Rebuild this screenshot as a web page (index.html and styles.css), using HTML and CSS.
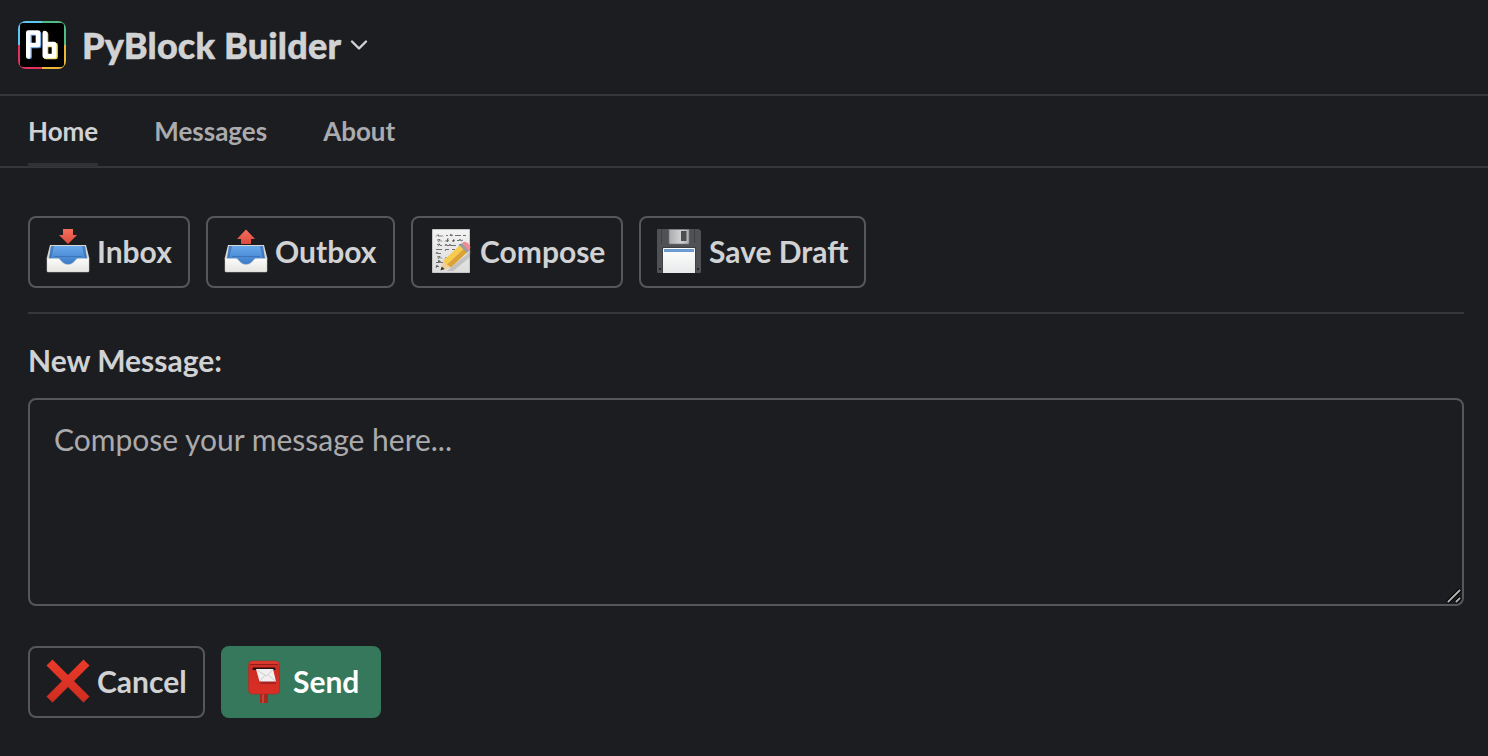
FILE: index.html
```html
<!DOCTYPE html>
<html lang="en">
<head>
<meta charset="utf-8">
<title>PyBlock Builder</title>
<link rel="stylesheet" href="styles.css">
</head>
<body>
<header class="header">
  <svg class="logo" viewBox="0 0 48 48">
    <defs><clipPath id="logo-clip"><rect width="48" height="48" rx="8"/></clipPath></defs>
    <g clip-path="url(#logo-clip)">
      <path fill="#5cc8f2" d="M0 0h24v24H0z"/><path fill="#4fbd84" d="M24 0h24v24H24z"/>
      <path fill="#e0315f" d="M0 24h24v24H0z"/><path fill="#edb63a" d="M24 24h24v24H24z"/>
      <rect x="2" y="2" width="44" height="44" rx="3" fill="#000"/>
    </g>
    <g fill="none" stroke-linejoin="round" stroke-linecap="round" stroke-width="4.600">
      <path stroke="#5b96df" d="M11.600 36V12.500H21V25H13.500"/>
      <path stroke="#f5df68" d="M28 13V36H37.500V24H30"/>
      <path stroke="#fff" d="M10.300 35.500V11.500H20V24H12.500"/>
      <path stroke="#fff" d="M26.800 12V35H36V23H29"/>
    </g>
  </svg>
  <h1 class="title">PyBlock Builder</h1>
  <svg class="chevron" viewBox="0 0 18 12"><path d="M2 2.500l7 7 7-7" fill="none" stroke="#d1d2d3" stroke-width="2.400" stroke-linecap="round" stroke-linejoin="round"/></svg>
</header>
<nav class="tabs">
  <a class="tab tab-active">Home</a>
  <a class="tab">Messages</a>
  <a class="tab">About</a>
</nav>
<main class="content">
  <div class="actions toolbar">
    <button class="btn btn-inbox">
      <svg class="icon" viewBox="0 0 44 44">
        <defs>
          <linearGradient id="tray-blue" x2="0" y2="1"><stop stop-color="#68a9ec"/><stop offset="1" stop-color="#3a78c6"/></linearGradient>
          <linearGradient id="tray-white" x2="0" y2="1"><stop stop-color="#fbfbfa"/><stop offset="1" stop-color="#e6e5e2"/></linearGradient>
          <linearGradient id="arrow-red" x2="0" y2="1"><stop stop-color="#f4705e"/><stop offset="1" stop-color="#dd493e"/></linearGradient>
          <g id="tray">
            <path fill="#d9d8d4" d="M4 16h36l3.500 14H.5z"/>
            <path fill="url(#tray-blue)" d="M5 17h34l2 14-12 5H15L3 31z"/>
            <path fill="#2d5c9d" opacity=".5" d="M8 17L5 30l-2-1L5 17zM36 17l3 13 2-1-2-12zM8 27h28v1H8z"/>
            <path fill="url(#tray-white)" stroke="#c9c8c4" stroke-width=".5" d="M1 29.500h11c3 0 3.500 6 10 6s7-6 10-6h11V42q0 1-1 1H2q-1 0-1-1z"/>
          </g>
        </defs>
        <use href="#tray"/>
        <path fill="url(#arrow-red)" d="M17 0h10v6h4l-9 9-9-9h4z"/>
      </svg>
      <span>Inbox</span>
    </button>
    <button class="btn btn-outbox">
      <svg class="icon" viewBox="0 0 44 44">
        <use href="#tray"/>
        <path fill="url(#arrow-red)" d="M17 15h10V10h4L22 .5 13 10h4z"/>
      </svg>
      <span>Outbox</span>
    </button>
    <button class="btn btn-compose">
      <svg class="icon" viewBox="0 0 44 44">
        <defs><linearGradient id="paper" x2="0" y2="1"><stop stop-color="#f3f3f3"/><stop offset="1" stop-color="#dcdcdc"/></linearGradient></defs>
        <path fill="url(#paper)" stroke="#c5c6c6" d="M3.500.5h37v43h-37z"/>
        <g fill="none" stroke="#484848" stroke-width=".75" stroke-linejoin="round">
          <path d="M7 7.500l2-2 1 2 1-1 1 1 1-1 1 1M17 7l1-1 1 1M21 7l1-2 0 2 2-1M26 7l1-1 1 1 1-1 1 1 1-1 1 1M34 7l1-1 1 1 1-1"/>
          <path d="M8 11l3-.5-2 2.500M11 12.500l1-1 1 1M16 12.500l1-1 1 1 1-3-1 3 2-1M23 12l2-.5M25 10l-1 2.500 2-1M28 12l1-1 1 1 1-2 1 2 2-1"/>
          <path d="M8 15.500l3-.5-2 2.500M11 17l1-1 1 1M16 17l1-2 1 2 1-1 1 1 1-2 1 2 1-1 1 1 1-1 1 1 1-1M30 17l1-2 1 1"/>
          <path d="M7 21l1-1 1 1 1-1 1 1 1-1 1 1M16 22l1-2 1 1 1-1 1 1M23 21l1-1 1 1 1-1"/>
          <path d="M7 25l1-2 1 2 1-1 1 1 1-1"/>
          <path d="M8 28l3-.5-2 2.500M11 29.500l1-1 1 1M16 29.500l1-1 1 1 1-1"/>
          <path d="M7 34l1-1 1 1 1-3 0 3 1-2 1 2 1-1 1 1"/>
          <path d="M7 39l1-3 0 2 1-1 1 1M13 38l1-1"/>
        </g>
        <path fill="#777" opacity=".3" d="M18 42L43 21l-3 8-16 13z"/>
        <path fill="#efd098" d="M11.500 41.500l3-10 7 7z"/>
        <path fill="#333" d="M11.500 41.500l1.200-4 3 2.500z"/>
        <path fill="#f7cc4d" d="M14 32L31 16l4 3.500L18 35.500z"/>
        <path fill="#dca233" d="M18 35.500L35 19.500l3.500 3.500L22 38.500z"/>
        <path fill="#9c9da1" d="M30.500 16.500l2.500-2.500 8 7-3 3z"/>
        <path fill="#ee8d92" d="M33 14q3-2.500 6.200.5 3.500 3 1.300 6.300l-.8.900z"/>
      </svg>
      <span>Compose</span>
    </button>
    <button class="btn btn-save">
      <svg class="icon" viewBox="0 0 44 44">
        <defs>
          <linearGradient id="metal"><stop stop-color="#a9abad"/><stop offset=".6" stop-color="#d0d2d3"/><stop offset="1" stop-color="#abadae"/></linearGradient>
          <linearGradient id="label" x2="0" y2="1"><stop stop-color="#fff"/><stop offset="1" stop-color="#e8e9ea"/></linearGradient>
        </defs>
        <path fill="#505154" d="M1 0h41l2 2v41q0 1-1 1H1q-1 0-1-1V1q0-1 1-1z"/>
        <path fill="#3e3f43" d="M4 0h1v15H4zM37 0h1v14h-1zM5 18h34v26h-1V19H6v25H5z"/>
        <path fill="url(#metal)" stroke="#77797c" stroke-width=".6" d="M12 .4h20V14q0 1-1 1H13q-1 0-1-1z"/>
        <rect x="24" y="2" width="5.500" height="10" fill="#4d4e50"/>
        <path fill="url(#label)" d="M6 20q0-1 1-1h30q1 0 1 1v24H6z"/>
        <path fill="#6d9bd3" d="M7 20h30v3H7z"/>
        <path fill="#222327" d="M2 39h2v2H2zM40 39h2v2h-2z"/>
      </svg>
      <span>Save Draft</span>
    </button>
  </div>
  <div class="field">
    <label class="label" for="message">New Message:</label>
    <div class="message-box">
      <textarea class="message" id="message" placeholder="Compose your message here..."></textarea>
      <svg class="grip" viewBox="0 0 16 16"><g fill="none" stroke-linecap="square"><path stroke="#000" stroke-width="4" d="M3 13L13 3M11 13l2-2"/><path stroke="#b5b5b5" stroke-width="1.800" d="M2.500 13.500l11-11M10.500 13.500l3-3"/></g></svg>
    </div>
  </div>
  <div class="actions">
    <button class="btn btn-cancel">
      <svg class="icon" viewBox="0 0 44 44">
        <defs><linearGradient id="cross" x2="0" y2="1"><stop stop-color="#ec3a2a"/><stop offset="1" stop-color="#ce2d20"/></linearGradient></defs>
        <path fill="url(#cross)" d="M6.500.5L22 16 37.500.5l6 6L28 22l15.500 15.500-6 6L22 28 6.500 43.500l-6-6L16 22 .5 6.500z"/>
      </svg>
      <span>Cancel</span>
    </button>
    <button class="btn btn-send">
      <svg class="icon" viewBox="0 0 44 44">
        <defs><linearGradient id="postbox" x2="0" y2="1"><stop stop-color="#e44136"/><stop offset=".15" stop-color="#cc2c24"/><stop offset="1" stop-color="#da2e25"/></linearGradient></defs>
        <path fill="#a72820" d="M18 34h8v10h-8z"/><path fill="#c74334" d="M20 35h2v9h-2z"/>
        <path fill="url(#postbox)" stroke="#a92921" stroke-width=".6" d="M6.500 6q0-4 4-4h23q4 0 4 4v25q0 4-4 4h-23q-4 0-4-4z"/>
        <path fill="#8f1e1a" d="M8 5h28v1H8z"/><rect x="10.500" y="8.500" width="23" height="2.500" rx="1" fill="#24110f"/>
        <path fill="#791b18" opacity=".5" d="M16 21h18v4H19z"/>
        <path fill="#f0f0f0" d="M14 10h17l3 12.500H17.500z"/>
        <path fill="none" stroke="#c4c4c4" stroke-width=".8" d="M14.500 11l10 6L31 10.500M18 22l5-6M33.500 22L26 16"/>
      </svg>
      <span>Send</span>
    </button>
  </div>
</main>
</body>
</html>
```
FILE: styles.css
```css
* { box-sizing: border-box; }
body {
  margin: 0;
  background: #1c1d21;
  color: #d1d2d3;
  font-family: Lato, sans-serif;
}
.header {
  height: 96px;
  padding: 21px 18px 0;
  display: flex;
  align-items: flex-start;
  border-bottom: 2px solid #35373b;
}
.logo { width: 48px; height: 48px; }
.title {
  margin: 1px 0 0 16px;
  font-size: 36px;
  line-height: 46px;
  font-weight: 900;
  letter-spacing: 0.18px;
  -webkit-text-stroke: 0.5px #d1d2d3;
  white-space: nowrap;
}
.chevron { width: 18px; height: 12px; margin: 18px 0 0 9px; }
.tabs {
  height: 72px;
  padding: 0 28px;
  display: flex;
  gap: 56px;
  border-bottom: 2px solid #35373b;
}
.tab {
  height: 71px;
  padding-top: 15px;
  font-size: 26px;
  line-height: 40px;
  font-weight: 700;
  color: #ababad;
  border-bottom: 4px solid transparent;
}
.tab-active { color: #d1d2d3; border-bottom-color: #323234; }
.content { padding: 48px 24px 0 28px; }
.actions { display: flex; gap: 16px; }
.toolbar { padding-bottom: 24px; border-bottom: 2px solid #35373b; }
.btn {
  height: 72px;
  padding: 0 0 2px 16px;
  display: flex;
  align-items: center;
  gap: 7px;
  border: 2px solid #565759;
  border-radius: 8px;
  background: transparent;
  color: #d1d2d3;
  font: 700 30px/44px Lato, sans-serif;
  white-space: nowrap;
}
.icon { width: 44px; height: 44px; flex: none; }
.btn-inbox { width: 162px; }
.btn-outbox { width: 189px; }
.btn-compose { width: 212px; }
.btn-save { width: 227px; gap: 8px; }
.btn-cancel { width: 177px; }
.btn-send { width: 160px; padding-left: 19px; border-color: #35785b; background: #35785b; color: #fff; }
.field { padding: 24px 0 40px; }
.label {
  display: block;
  height: 60px;
  font-size: 30px;
  line-height: 44px;
  font-weight: 700;
}
.message-box { position: relative; height: 208px; }
.message {
  display: block;
  width: 100%;
  height: 208px;
  padding: 17px 24px;
  border: 2px solid #565759;
  border-radius: 8px;
  background: transparent;
  color: #d1d2d3;
  font: 400 30px/44px Lato, sans-serif;
  resize: none;
  outline: none;
}
.message::placeholder { color: #ababad; opacity: 1; }
.grip { position: absolute; right: 2px; bottom: 2px; width: 16px; height: 16px; }
```
